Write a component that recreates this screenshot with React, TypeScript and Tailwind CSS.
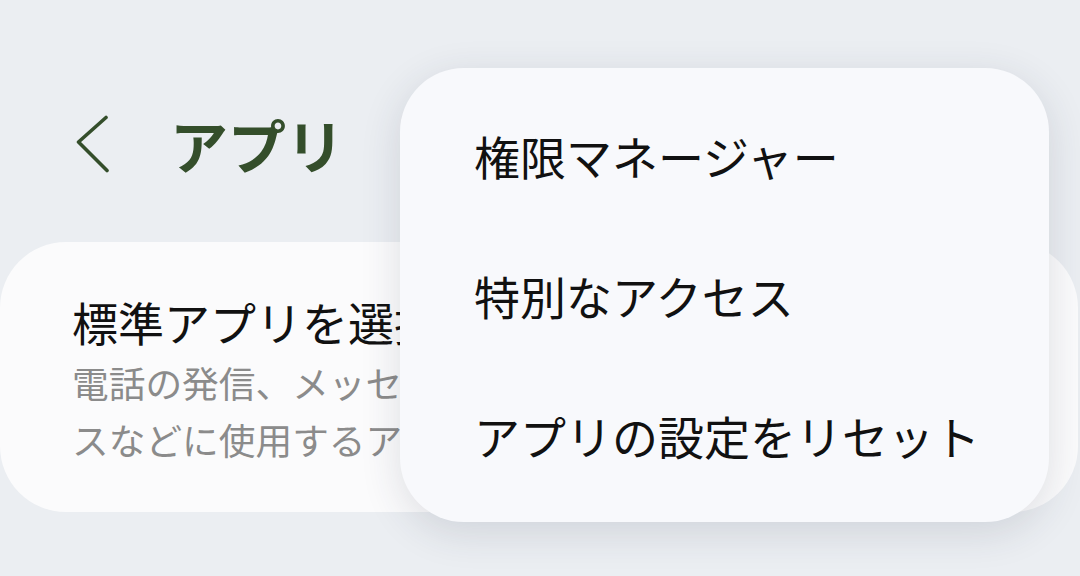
import React from 'react';

const jp = "font-['Noto_Sans_CJK_JP','Noto_Sans',sans-serif]";

function BackChevron() {
  return (
    <svg width="34" height="58" viewBox="0 0 34 58" fill="none">
      <polyline
        points="30,2.5 2.5,27 31,55.5"
        stroke="#344e2b"
        strokeWidth="3.6"
        strokeLinecap="round"
        strokeLinejoin="round"
      />
    </svg>
  );
}

const menuItems = ['権限マネージャー', '特別なアクセス', 'アプリの設定をリセット'];

function App() {
  return (
    <div className={`relative w-[1080px] h-[576px] overflow-hidden bg-[#ebeef2] ${jp}`}>
      <header className="mt-[114px] h-[60px] flex items-center pl-[76px]">
        <BackChevron />
        <h1 className="ml-[60px] text-[58px] leading-[60px] font-bold text-[#344e2b]">アプリ</h1>
      </header>

      <section className="mt-[68px] w-[1078px] h-[270px] rounded-[66px] bg-[#fbfbfc] pl-[72px] pt-[51px]">
        {/* the menu covers the rest of the card, so the lines stop under it */}
        <div className="w-[336px] overflow-hidden">
          <div className="text-[46px] leading-[56px] text-[#111] whitespace-nowrap">標準アプリを選択</div>
          <div className="mt-[5px] text-[36.7px] leading-[57px] text-[#8b8b8b] whitespace-nowrap">
            <div>電話の発信、メッセージの送信、ウェブサイトへのアクセ</div>
            <div>スなどに使用するアプリを選択します。</div>
          </div>
        </div>
      </section>

      <div className="absolute left-[400px] top-[68px] w-[649px] h-[454px] rounded-[64px] bg-[#f8f9fc] shadow-[0_10px_40px_rgba(40,50,70,0.14)] pt-[17px] pl-[74px]">
        {menuItems.map((item) => (
          <div key={item} className="h-[140px] flex items-center text-[46px] leading-[56px] text-[#111] whitespace-nowrap">
            {item}
          </div>
        ))}
      </div>
    </div>
  );
}

export default App;
